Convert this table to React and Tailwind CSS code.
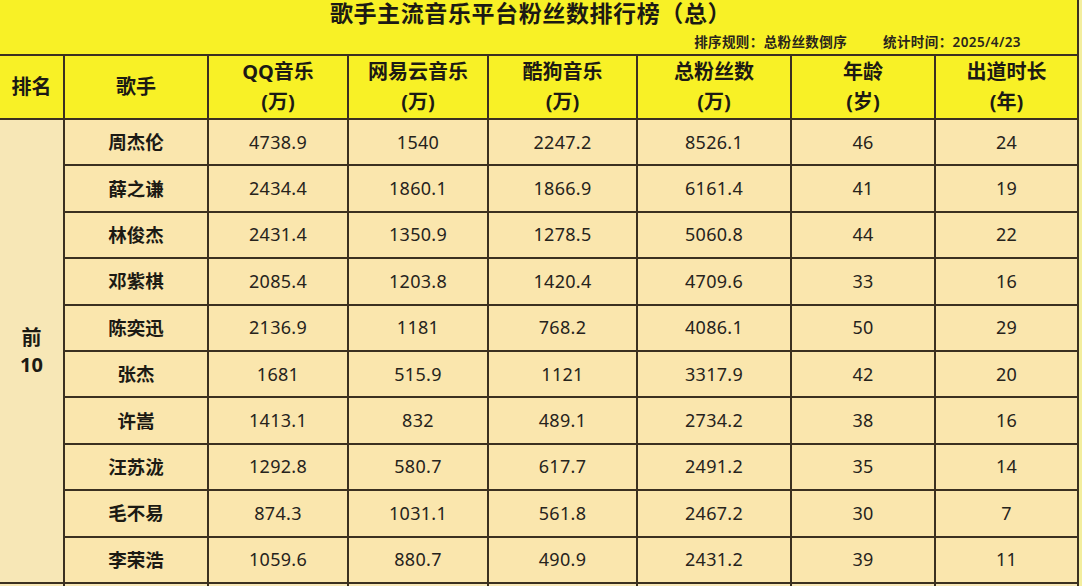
const headers = [
  ['QQ音乐', '(万)'],
  ['网易云音乐', '(万)'],
  ['酷狗音乐', '(万)'],
  ['总粉丝数', '(万)'],
  ['年龄', '(岁)'],
  ['出道时长', '(年)'],
];

const rows = [
  ['周杰伦', '4738.9', '1540', '2247.2', '8526.1', '46', '24'],
  ['薛之谦', '2434.4', '1860.1', '1866.9', '6161.4', '41', '19'],
  ['林俊杰', '2431.4', '1350.9', '1278.5', '5060.8', '44', '22'],
  ['邓紫棋', '2085.4', '1203.8', '1420.4', '4709.6', '33', '16'],
  ['陈奕迅', '2136.9', '1181', '768.2', '4086.1', '50', '29'],
  ['张杰', '1681', '515.9', '1121', '3317.9', '42', '20'],
  ['许嵩', '1413.1', '832', '489.1', '2734.2', '38', '16'],
  ['汪苏泷', '1292.8', '580.7', '617.7', '2491.2', '35', '14'],
  ['毛不易', '874.3', '1031.1', '561.8', '2467.2', '30', '7'],
  ['李荣浩', '1059.6', '880.7', '490.9', '2431.2', '39', '11'],
];

const App = () => {
  return (
    <div className="w-[1082px] h-[586px] overflow-hidden bg-[#f3ee9e] font-['Noto_Sans','Noto_Sans_CJK_SC',sans-serif] text-[#1c1a14]">
      <div className="w-[1079px] border-r-2 border-[#3b3020]">
        {/* title block */}
        <div className="h-[54px] bg-[#f8f126]">
          <div className="text-center pr-[16px] text-[23px] leading-[26px] font-bold tracking-[0.6px]">
            歌手主流音乐平台粉丝数排行榜（总）
          </div>
          <div className="mt-[8px] flex justify-end gap-[36px] pr-[56px] text-[13.5px] leading-[16px] font-semibold text-[#2a261c] tracking-[0.4px]">
            <span>排序规则：总粉丝数倒序</span>
            <span>统计时间：2025/4/23</span>
          </div>
        </div>

        {/* table */}
        <div className="grid grid-cols-[63px_142px_138px_138px_147px_152px_142px_141px] grid-rows-[62px_repeat(11,44.4px)] gap-[2px] pt-[2px] bg-[#3b3020]">
          <div className="bg-[#f8f126] flex items-center justify-center text-[20px] font-bold">排名</div>
          <div className="bg-[#f8f126] flex items-center justify-center text-[20px] font-bold">歌手</div>
          {headers.map(([a, b]) => (
            <div key={a} className="bg-[#f8f126] flex flex-col items-center justify-center text-[20px] leading-[30px] font-bold">
              <span>{a}</span>
              <span>{b}</span>
            </div>
          ))}

          <div className="row-span-10 bg-[#f7e7b6] flex flex-col items-center justify-center text-[20px] leading-[27px] font-bold">
            <span>前</span>
            <span>10</span>
          </div>
          {rows.map((r) =>
            r.map((v, i) => (
              <div
                key={r[0] + i}
                className={
                  i === 0
                    ? 'bg-[#fae6ad] flex items-center justify-center text-[18.5px] font-bold'
                    : 'bg-[#fae6ad] flex items-center justify-center text-[18px] text-[#26231c] tracking-[0.3px]'
                }
              >
                {v}
              </div>
            ))
          )}
          {Array.from({ length: 8 }).map((_, i) => (
            <div key={'x' + i} className="bg-[#f8e8b8]" />
          ))}
        </div>
      </div>
    </div>
  );
};

export default App;
